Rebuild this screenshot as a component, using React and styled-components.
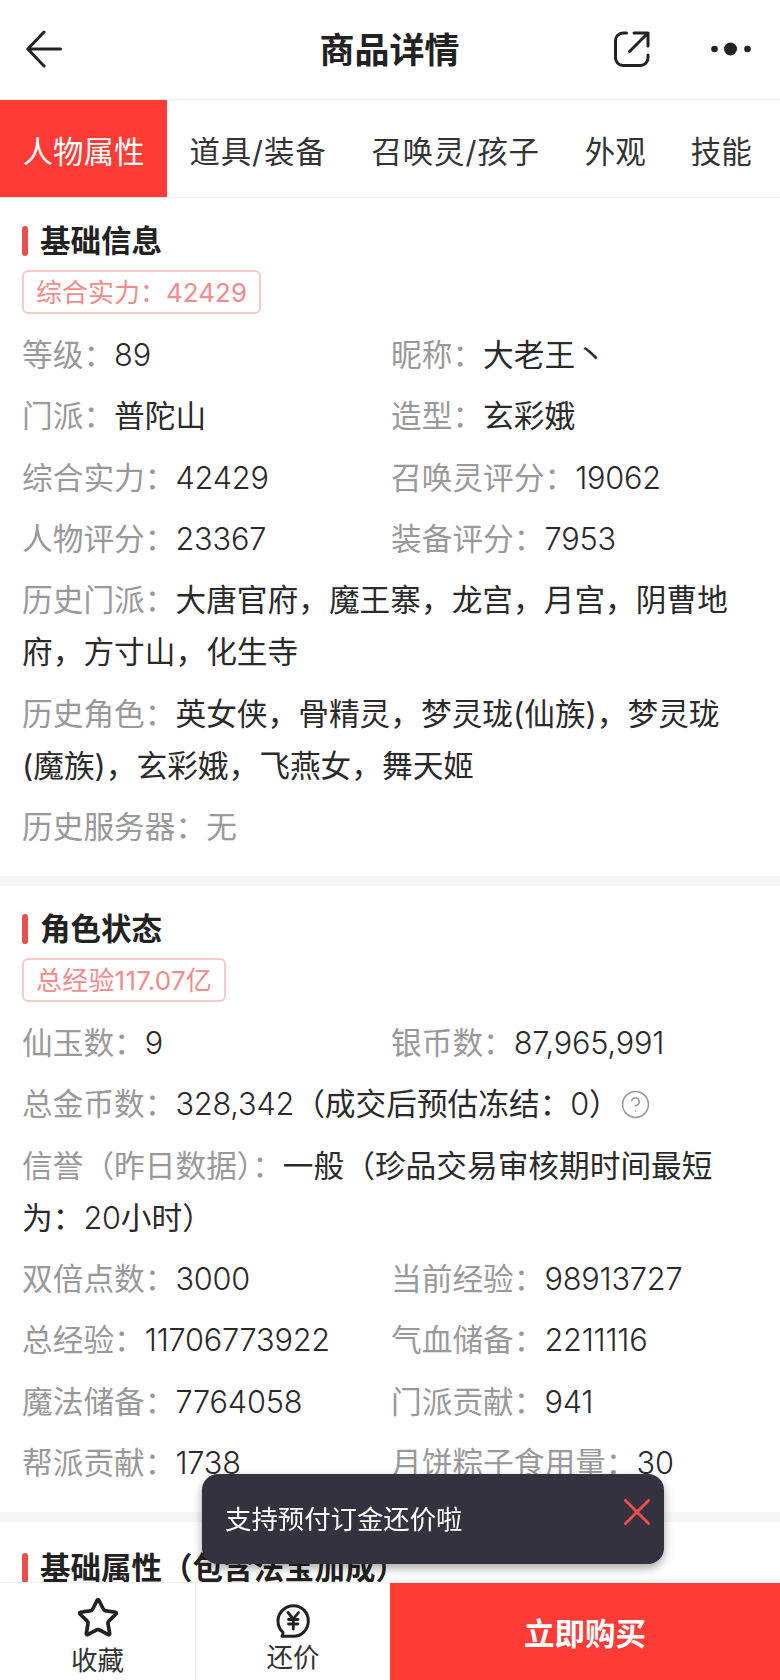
import React from 'react';
import styled, { createGlobalStyle } from 'styled-components';
import { Star, CircleHelp } from 'lucide-react';

const Global = createGlobalStyle`
  html, body { margin: 0; padding: 0; background: #fff; }
  body { font-family: "Inter", "Noto Sans CJK SC", sans-serif; color: #222; }
  * { box-sizing: border-box; }
`;

const Page = styled.div`
  width: 780px;
  height: 1680px;
  overflow: hidden;
  background: #f5f5f5;
`;

const Header = styled.header`
  height: 100px;
  background: #fff;
  border-bottom: 1px solid #eee;
  display: grid;
  grid-template-columns: 1fr auto 1fr;
  align-items: center;
  padding: 0 29px 2px 28px;
`;

const Title = styled.h1`
  margin: 2px 0 0;
  font-size: 35px;
  font-weight: 600;
  color: #222;
  line-height: 48px;
`;

const HeaderActions = styled.div`
  display: flex;
  justify-content: flex-end;
  align-items: center;
  gap: 61px;
`;

const IconButton = styled.span`
  display: flex;
  color: #222;
  margin-left: ${p => p.$shift || 0}px;
`;

const Tabs = styled.nav`
  height: 98px;
  background: #fff;
  border-bottom: 1px solid #eee;
  display: flex;
`;

const Tab = styled.div`
  padding: 2px 22.5px 0;
  height: 97px;
  display: flex;
  align-items: center;
  font-size: 30.5px;
  white-space: nowrap;
  letter-spacing: ${p => p.$track}px;
  color: ${p => (p.$active ? '#fff' : '#333')};
  background: ${p => (p.$active ? '#ff3b36' : 'transparent')};
`;

const Section = styled.section`
  background: #fff;
  padding: ${p => p.$top || 28}px 22px 23px;
  margin-bottom: 10px;
`;

const SectionTitle = styled.h2`
  margin: 0 0 14px;
  height: 30px;
  display: flex;
  align-items: flex-start;
  gap: 12px;
  font-size: 30.5px;
  line-height: 29px;
  font-weight: 600;
  color: #222;
  &::before {
    content: '';
    width: 6px;
    height: 30px;
    border-radius: 3px;
    background: #e8504e;
  }
`;

const TagRow = styled.div`
  display: flex;
  margin-bottom: 15px;
`;

const Tag = styled.span`
  height: 44px;
  padding: 0 12px 4px;
  display: flex;
  align-items: center;
  border: 2px solid #f9c9c9;
  border-radius: 6px;
  font-size: 26px;
  letter-spacing: ${p => p.$track}px;
  color: #f28b8b;
  white-space: nowrap;
`;

const Fields = styled.div`
  display: grid;
  grid-template-columns: 369px 1fr;
  row-gap: 9.35px;
`;

const Field = styled.div`
  grid-column: ${p => (p.$full ? '1 / -1' : 'auto')};
  font-size: 30.7px;
  line-height: 52px;
  color: #2a2a2a;
`;

const Label = styled.span`
  color: #999;
`;

const Num = styled.span`
  font-weight: 300;
  letter-spacing: -0.2px;
`;

const HelpIcon = styled.span`
  display: inline-flex;
  vertical-align: -5px;
  margin-left: 0;
  color: #999;
`;

const Toast = styled.div`
  position: fixed;
  left: 202px;
  top: 1474px;
  width: 462px;
  height: 90px;
  padding: 27px 14px 0 23px;
  border-radius: 16px;
  background: #34323f;
  box-shadow: 0 4px 10px rgba(0, 0, 0, 0.35);
  display: flex;
  justify-content: space-between;
  align-items: flex-start;
`;

const ToastText = styled.span`
  font-size: 26.4px;
  line-height: 36px;
  color: #fff;
`;

const ToastClose = styled.span`
  display: flex;
  margin-top: -2px;
`;

const Footer = styled.footer`
  position: fixed;
  left: 0;
  bottom: 0;
  width: 780px;
  height: 98px;
  background: #fff;
  border-top: 1px solid #eee;
  display: grid;
  grid-template-columns: 196px 194px 1fr;
`;

const FooterAction = styled.div`
  display: flex;
  flex-direction: column;
  align-items: center;
  padding-top: ${p => p.$top}px;
  gap: ${p => p.$gap}px;
  border-right: ${p => (p.$divided ? '1px solid #eee' : 'none')};
  font-size: 26.5px;
  line-height: 36px;
  color: #333;
`;

const BuyButton = styled.div`
  background: #ff3b36;
  color: #fff;
  font-size: 30.5px;
  font-weight: 600;
  display: flex;
  align-items: center;
  justify-content: center;
`;

const BackIcon = () => (
  <svg width="36" height="38" viewBox="0 0 36 38" fill="none" stroke="currentColor" strokeWidth="3" strokeLinecap="round" strokeLinejoin="round">
    <path d="M34.5 19H1.8M18 2L1.8 19L18 36" />
  </svg>
);

const ShareIcon = () => (
  <svg width="36" height="36" viewBox="0 0 36 36" fill="none" stroke="currentColor" strokeWidth="3" strokeLinecap="round" strokeLinejoin="round">
    <path d="M12.5 2H9a7.5 7.5 0 0 0-7.5 7.5V27A7.5 7.5 0 0 0 9 34.500H26.500a7.500 7.500 0 0 0 7.500-7.500V24" />
    <path d="M15.500 20.500L34 2M20 2H34V15" />
  </svg>
);

const MoreIcon = () => (
  <svg width="40" height="14" viewBox="0 0 40 14" fill="currentColor">
    <circle cx="3.500" cy="7" r="3.300" />
    <circle cx="19.500" cy="7" r="6.500" />
    <circle cx="36.500" cy="7" r="3.300" />
  </svg>
);

const BargainIcon = () => (
  <svg width="34" height="34" viewBox="0 0 34 34" fill="none" stroke="#222" strokeLinecap="round" strokeLinejoin="round">
    <path strokeWidth="3" d="M6 32.300H17.500C25.800 32.300 32.300 25.500 32.300 17S25.800 1.700 17.500 1.700S2 8.500 2 17C2 21.500 3.800 25.500 7 28.300C7 29.800 6.800 31.200 6 32.300Z" />
    <path strokeWidth="2.800" d="M12 8.500L17.300 15L22.500 8.500M17.300 15V25M12.500 15.500H22M12.500 20H22" />
  </svg>
);

const CloseIcon = () => (
  <svg width="26" height="26" viewBox="0 0 26 26" fill="none" stroke="#e8504e" strokeWidth="3" strokeLinecap="round">
    <path d="M1.500 1.500L24.500 24.500M24.500 1.500L1.500 24.500" />
  </svg>
);

const tabs = ['人物属性', '道具/装备', '召唤灵/孩子', '外观', '技能'];

const basicFields = [
  ['等级：', '89'],
  ['昵称：', '大老王丶'],
  ['门派：', '普陀山'],
  ['造型：', '玄彩娥'],
  ['综合实力：', '42429'],
  ['召唤灵评分：', '19062'],
  ['人物评分：', '23367'],
  ['装备评分：', '7953'],
  ['历史门派：', '大唐官府，魔王寨，龙宫，月宫，阴曹地府，方寸山，化生寺', true],
  ['历史角色：', '英女侠，骨精灵，梦灵珑(仙族)，梦灵珑(魔族)，玄彩娥，飞燕女，舞天姬', true],
  ['历史服务器：', '无', true, true],
];

const stateFields = [
  ['仙玉数：', '9'],
  ['银币数：', '87,965,991'],
  ['总金币数：', '328,342（成交后预估冻结：0）', true, false, true],
  ['信誉（昨日数据）：', '一般（珍品交易审核期时间最短为：20小时）', true],
  ['双倍点数：', '3000'],
  ['当前经验：', '98913727'],
  ['总经验：', '11706773922'],
  ['气血储备：', '2211116'],
  ['魔法储备：', '7764058'],
  ['门派贡献：', '941'],
  ['帮派贡献：', '1738'],
  ['月饼粽子食用量：', '30'],
];

const Value = ({ text }) =>
  text.split(/([\d,]+)/).map((part, i) => (i % 2 ? <Num key={i}>{part}</Num> : part));

const FieldList = ({ items }) => (
  <Fields>
    {items.map(([label, value, full, muted, help]) => (
      <Field key={label} $full={full}>
        <Label>{label}</Label>
        {muted ? <Label>{value}</Label> : <Value text={value} />}
        {help && (
          <HelpIcon>
            <CircleHelp size={31} strokeWidth={1.2} />
          </HelpIcon>
        )}
      </Field>
    ))}
  </Fields>
);

export default function App() {
  return (
    <Page>
      <Global />
      <Header>
        <IconButton $shift={-2}><BackIcon /></IconButton>
        <Title>商品详情</Title>
        <HeaderActions>
          <IconButton><ShareIcon /></IconButton>
          <IconButton><MoreIcon /></IconButton>
        </HeaderActions>
      </Header>
      <Tabs>
        {tabs.map((t, i) => (
          <Tab key={t} $active={i === 0} $track={t.includes('/') ? 0.8 : 0}>{t}</Tab>
        ))}
      </Tabs>
      <Section>
        <SectionTitle>基础信息</SectionTitle>
        <TagRow><Tag $track={0}>综合实力：42429</Tag></TagRow>
        <FieldList items={basicFields} />
      </Section>
      <Section>
        <SectionTitle>角色状态</SectionTitle>
        <TagRow><Tag $track={0.2}>总经验117.07亿</Tag></TagRow>
        <FieldList items={stateFields} />
      </Section>
      <Section $top={31}>
        <SectionTitle>基础属性（包含法宝加成）</SectionTitle>
      </Section>
      <Toast>
        <ToastText>支持预付订金还价啦</ToastText>
        <ToastClose><CloseIcon /></ToastClose>
      </Toast>
      <Footer>
        <FooterAction $divided $top={13} $gap={2}>
          <Star size={44} strokeWidth={2} color="#222" />
          收藏
        </FooterAction>
        <FooterAction $top={21} $gap={1}>
          <BargainIcon />
          还价
        </FooterAction>
        <BuyButton>立即购买</BuyButton>
      </Footer>
    </Page>
  );
}
